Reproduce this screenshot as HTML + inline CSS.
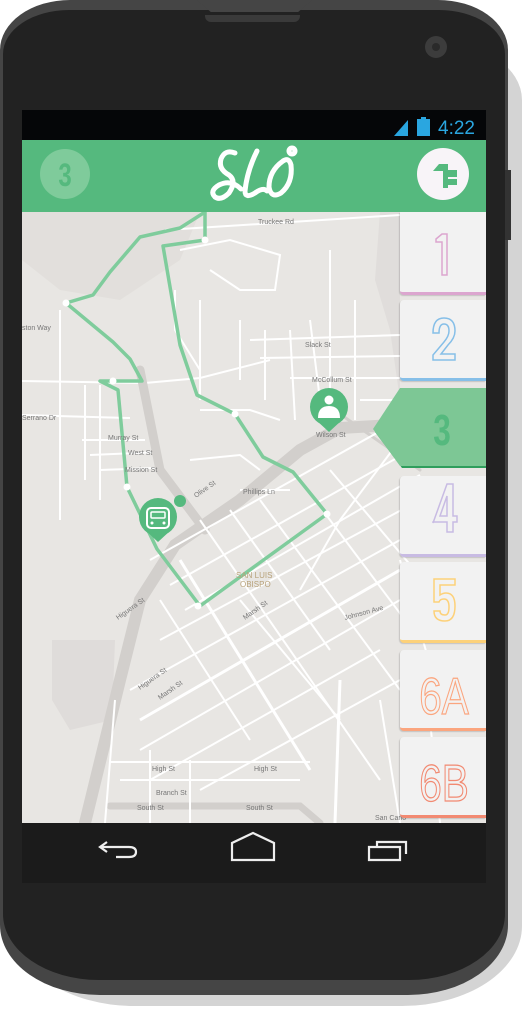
<!DOCTYPE html>
<html><head><meta charset="utf-8"><style>
html,body{margin:0;padding:0;background:#fff;width:525px;height:1016px;overflow:hidden;font-family:"Liberation Sans",sans-serif}
.abs{position:absolute}
.tab{position:absolute;left:400px;width:86px;height:78px;background:#f2f2f2;border-radius:4px 0 0 4px;box-shadow:-1px 1px 1px rgba(0,0,0,.15)}
.tab svg{position:absolute;left:0;top:0}
</style></head><body>
<div class="abs" style="left:14px;top:40px;width:508px;height:966px;background:#d4d4d4;border-radius:90px 90px 120px 120px/60px 60px 80px 80px"></div>
<div class="abs" style="left:0;top:0;width:508px;height:995px;background:#454545;border-radius:70px 70px 100px 100px/50px 50px 70px 70px"></div>
<div class="abs" style="left:3px;top:10px;width:502px;height:970px;background:#222;border-radius:66px 66px 96px 96px/44px 44px 66px 66px"></div>
<div class="abs" style="left:197px;top:0;width:115px;height:12px;background:#454545;clip-path:polygon(0 0,100% 0,88% 100%,12% 100%)"></div>
<div class="abs" style="left:205px;top:15px;width:95px;height:7px;background:#3a3a3a;border-radius:0 0 6px 6px"></div>
<div class="abs" style="left:425px;top:36px;width:22px;height:22px;border-radius:50%;background:#3c3c3c"></div>
<div class="abs" style="left:432px;top:43px;width:8px;height:8px;border-radius:50%;background:#2a2a2a"></div>
<div class="abs" style="left:505px;top:170px;width:6px;height:70px;background:#333"></div>

<div class="abs" style="left:22px;top:110px;width:464px;height:30px;background:#050608"></div>
<svg class="abs" style="left:392px;top:116px" width="90" height="22">
<polygon points="2,20 16,4 16,20" fill="#2aa6e0"/>
<rect x="25" y="3" width="13" height="17" fill="#2aa6e0"/><rect x="29" y="1" width="5" height="3" fill="#2aa6e0"/>
<text x="46" y="18" font-size="19" fill="#2aa6e0" font-family="Liberation Sans">4:22</text>
</svg>
<div class="abs" style="left:22px;top:140px;width:464px;height:72px;background:#55b97e"></div>
<div class="abs" style="left:40px;top:149px;width:50px;height:50px;border-radius:50%;background:#7fcb9b"></div>
<svg class="abs" style="left:40px;top:149px" width="50" height="50"><text x="25" y="37" text-anchor="middle" font-size="32" font-weight="bold" fill="#55b97e" font-family="Liberation Sans" transform="translate(25 0) scale(.75 1) translate(-25 0)">3</text></svg>
<svg class="abs" style="left:205px;top:141px" width="100" height="66" fill="none" stroke="#fff" stroke-width="5" stroke-linecap="round">
<path d="M30 12 Q20 8 16 18 Q13 28 24 34 Q32 40 24 52 Q16 60 10 56 Q4 50 14 44 Q26 38 36 48"/>
<path d="M52 10 Q42 30 40 50 Q40 58 50 52 Q58 46 62 50"/>
<path d="M78 20 Q64 30 64 46 Q66 58 76 52 Q88 42 86 24 Q84 16 78 20"/>
<circle cx="87" cy="10" r="3"/>
</svg>
<div class="abs" style="left:417px;top:148px;width:52px;height:52px;border-radius:50%;background:#f8f4f8"></div>
<svg class="abs" style="left:417px;top:148px" width="52" height="52"><path d="M16 23 L22 16 L31 16 L31 40 L26 40 L26 23 Z" fill="#55b97e"/><rect x="31" y="22" width="9" height="7" fill="#55b97e"/><rect x="31" y="31" width="9" height="6" fill="#55b97e"/></svg>

<svg class="abs" style="left:22px;top:212px" width="464" height="611" viewBox="22 212 464 611">
<rect x="22" y="212" width="464" height="611" fill="#e8e6e3"/>
<path d="M22 212 L200 212 L180 260 L120 300 L60 290 L22 260 Z" fill="#e2dfdc"/>
<path d="M52 640 L115 640 L112 720 L70 730 L52 700Z" fill="#dfdcda"/>
<path d="M380 212 L400 212 L400 400 L390 330 L375 280Z" fill="#e0dddb"/>
<g stroke="#fff" stroke-width="2" fill="none">
<path d="M22 381 L145 383 L200 378 L270 360"/>
<path d="M60 310 L60 520"/><path d="M85 385 L85 480"/><path d="M100 385 L100 500"/>
<path d="M22 415 L130 418"/><path d="M82 440 L145 440"/><path d="M90 455 L160 452"/>
<path d="M100 470 L155 468"/><path d="M250 340 L400 335"/><path d="M260 358 L400 356"/>
<path d="M290 378 L400 378"/><path d="M330 250 L330 400"/><path d="M355 300 L355 420"/>
<path d="M165 230 L400 215"/><path d="M180 250 L230 240 L280 255 L275 290 L240 290 L210 270"/>
<path d="M200 300 L200 400"/><path d="M175 290 L175 330 L200 370"/><path d="M240 320 L240 380"/>
<path d="M265 330 L265 400"/><path d="M290 330 L295 420"/><path d="M310 320 L320 400"/>
<path d="M200 410 L250 410 L280 420"/><path d="M360 400 L400 400"/>
<path d="M190 460 L240 455 L260 470"/><path d="M240 490 L290 490"/>
<path d="M400 440 L340 520 L300 590"/>
</g>
<g stroke="#d2cfcc" fill="none" stroke-linecap="round">
<path d="M140 370 L160 470 L205 530" stroke-width="9"/>
<path d="M85 823 L120 680 L140 600 L175 545 L240 500 L300 450 L340 428 L410 424" stroke-width="12"/>
<path d="M110 806 L300 806 L320 823" stroke-width="7"/>
<path d="M320 400 L420 470" stroke-width="3"/>
</g>
<g stroke="#fff" stroke-width="2" fill="none">
<path d="M150 560 L400 420"/><path d="M170 585 L420 445"/><path d="M185 610 L420 475"/>
<path d="M160 640 L420 500"/><path d="M130 690 L400 540"/><path d="M140 720 L400 570" stroke-width="3"/>
<path d="M140 750 L400 600"/><path d="M150 780 L380 650"/><path d="M200 790 L400 680"/>
<path d="M200 520 L380 780"/><path d="M230 510 L330 650"/><path d="M260 500 L400 690"/>
<path d="M180 560 L310 770" stroke-width="3"/><path d="M300 480 L420 640"/><path d="M160 600 L250 740"/>
<path d="M330 470 L440 600"/><path d="M240 600 L340 720"/><path d="M110 762 L310 762"/>
<path d="M120 780 L300 780"/><path d="M115 700 L105 823"/><path d="M150 750 L150 823"/>
<path d="M190 760 L190 823"/><path d="M340 680 L335 823" stroke-width="3"/>
<path d="M400 560 L440 700"/><path d="M380 700 L400 823"/><path d="M430 720 L440 823"/>
</g>
<g stroke="#7fcc9c" stroke-width="3.5" fill="none" stroke-linejoin="round">
<path d="M205 212 L205 240 L163 246 L180 345 L197 395 L235 414 L263 457 L293 472 L327 514 L200 606 L157 549 L127 487 L118 390 L100 381 L142 381 L130 359 L113 342 L66 303 L93 295 L110 272 L140 237 L180 228 L205 212"/>
</g>
<g fill="#fff">
<circle cx="205" cy="240" r="3.5"/><circle cx="66" cy="303" r="3.5"/><circle cx="113" cy="381" r="3.5"/>
<circle cx="235" cy="414" r="3.5"/><circle cx="327" cy="514" r="3.5"/><circle cx="127" cy="487" r="3.5"/><circle cx="198" cy="606" r="3.5"/><circle cx="244" cy="584" r="3.5"/>
</g>
<g font-size="7" fill="#777" font-family="Liberation Sans">
<text x="258" y="224">Truckee Rd</text><text x="305" y="347">Slack St</text><text x="312" y="382">McCollum St</text>
<text x="108" y="440">Murray St</text><text x="128" y="455">West St</text><text x="125" y="472">Mission St</text>
<text x="243" y="494">Phillips Ln</text><text x="316" y="437">Wilson St</text><text x="152" y="771">High St</text>
<text x="254" y="771">High St</text><text x="156" y="795">Branch St</text><text x="137" y="810">South St</text><text x="246" y="810">South St</text>
<text x="22" y="420">Serrano Dr</text><text x="22" y="330">ston Way</text><text x="375" y="820">San Carlo</text>
<text x="236" y="578" fill="#b8a27a" font-size="8">SAN LUIS</text><text x="240" y="587" fill="#b8a27a" font-size="8">OBISPO</text>
<text transform="translate(118,620) rotate(-35)">Higuera St</text><text transform="translate(140,690) rotate(-35)">Higuera St</text>
<text transform="translate(160,700) rotate(-35)">Marsh St</text><text transform="translate(245,620) rotate(-35)">Marsh St</text>
<text transform="translate(196,498) rotate(-35)">Olive St</text><text transform="translate(345,620) rotate(-15)">Johnson Ave</text>
</g>
<g fill="#55b97e">
<circle cx="329" cy="407" r="19"/><path d="M316 420 L329 432 L342 420Z"/>
<circle cx="158" cy="517" r="19"/><path d="M145 530 L158 542 L171 530Z"/>
<circle cx="180" cy="501" r="6"/>
</g>
<g fill="#fff"><circle cx="329" cy="400" r="4.5"/><path d="M318 418 Q318 406 329 406 Q340 406 340 418Z"/></g>
<rect x="147" y="508" width="22" height="20" rx="4" fill="none" stroke="#fff" stroke-width="2"/>
<rect x="151" y="512" width="14" height="6" rx="1" fill="none" stroke="#fff" stroke-width="1.5"/>
<circle cx="152" cy="523" r="1.5" fill="#fff"/><circle cx="164" cy="523" r="1.5" fill="#fff"/>
</svg>

<div class="tab" style="top:212px;height:80px;border-bottom:3px solid #dca6cf;border-radius:0 0 0 4px"><svg width="86" height="80"><path d="M36 27 L42 22 L47 22 L47 63 L42 63 L42 30 L36 30Z" fill="none" stroke="#dca6cf" stroke-width="1.5"/></svg></div>
<div class="tab" style="top:300px;border-bottom:3px solid #86bfe8"><svg width="86" height="80"><path d="M33 33 Q33 18 44 18 Q55 18 55 31 Q55 38 48 45 L41 54 L55 54 L55 60 L33 60 L33 55 L44 42 Q49 36 49 31 Q49 24 44 24 Q39 24 39 33Z" fill="none" stroke="#86bfe8" stroke-width="1.5"/></svg></div>
<svg class="abs" style="left:372px;top:388px" width="114" height="84"><polygon points="30,0 114,0 114,80 30,80 3,44" fill="#2f9e5c"/><polygon points="28,0 114,0 114,78 28,78 1,41" fill="#7dc795"/><text x="70" y="57" text-anchor="middle" font-size="44" font-weight="bold" fill="#55b97e" font-family="Liberation Sans" transform="translate(70 0) scale(.72 1) translate(-70 0)">3</text></svg>
<div class="tab" style="top:476px;border-bottom:3px solid #c8bbe3"><svg width="86" height="80"><path d="M33 47 L47 8 L53 8 L53 40 L57 40 L57 46 L53 46 L53 56 L47 56 L47 46 L33 46Z M40 40 L47 40 L47 20Z" fill="none" stroke="#c8bbe3" stroke-width="1.5"/></svg></div>
<div class="tab" style="top:562px;border-bottom:3px solid #fdd179"><svg width="86" height="80"><path d="M34 17 L55 17 L55 23 L40 23 L40 33 Q43 31 46 31 Q55 31 55 44 Q55 59 45 59 Q34 59 34 49 L40 49 Q40 53 45 53 Q49 53 49 45 Q49 37 44 37 Q40 37 39 40 L34 40Z" fill="none" stroke="#fdd179" stroke-width="1.5"/></svg></div>
<div class="tab" style="top:650px;border-bottom:3px solid #fba57e"><svg width="86" height="80"><text x="44" y="64" text-anchor="middle" font-size="52" fill="none" stroke="#fba57e" stroke-width="1.3" font-family="Liberation Sans" transform="translate(44 0) scale(.78 1) translate(-44 0)">6A</text></svg></div>
<div class="tab" style="top:737px;border-bottom:3px solid #f28a72"><svg width="86" height="80"><text x="44" y="64" text-anchor="middle" font-size="52" fill="none" stroke="#f28a72" stroke-width="1.3" font-family="Liberation Sans" transform="translate(44 0) scale(.78 1) translate(-44 0)">6B</text></svg></div>

<div class="abs" style="left:22px;top:823px;width:464px;height:60px;background:#1b1b1b"></div>
<svg class="abs" style="left:22px;top:823px" width="464" height="60" fill="none" stroke="#eee" stroke-width="2.2">
<path d="M85 19 L78 24 L85 29 M78 24 L107 24 Q114 24 114 29 Q114 34 107 34 L94 34"/>
<path d="M210 37 L210 20 L231 10 L252 20 L252 37Z"/>
<path d="M347 24 L378 24 L378 37 L347 37Z M355 24 L355 19 L384 19 L384 31"/>
</svg>
</body></html>
